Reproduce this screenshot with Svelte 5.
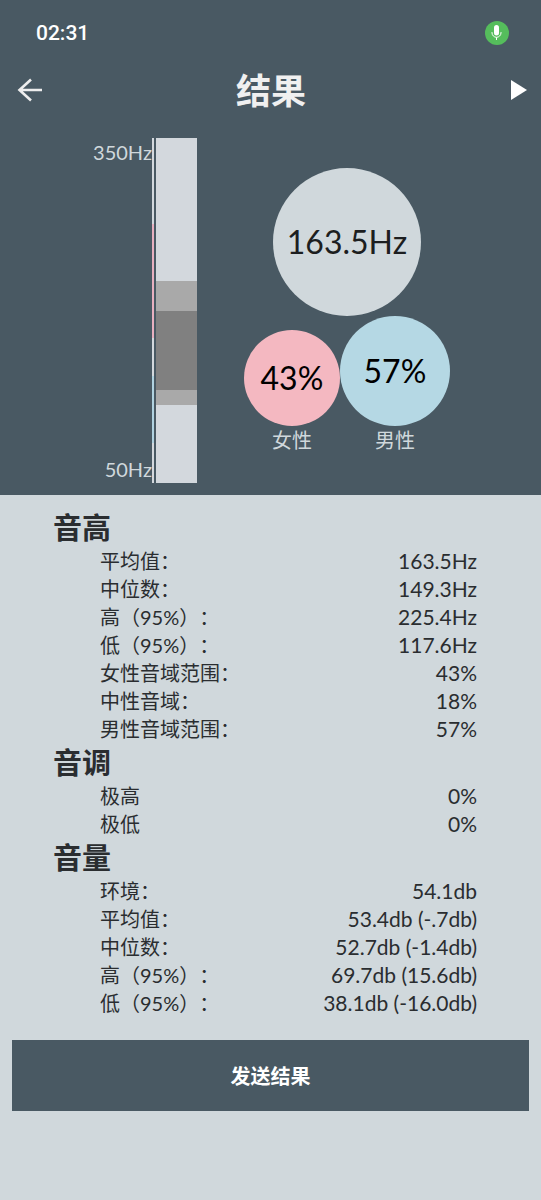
<script>
  const sections = [
    {
      title: '音高',
      rows: [
        ['平均值：', '163.5Hz'],
        ['中位数：', '149.3Hz'],
        ['高（95%）：', '225.4Hz'],
        ['低（95%）：', '117.6Hz'],
        ['女性音域范围：', '43%'],
        ['中性音域：', '18%'],
        ['男性音域范围：', '57%'],
      ],
    },
    {
      title: '音调',
      rows: [
        ['极高', '0%'],
        ['极低', '0%'],
      ],
    },
    {
      title: '音量',
      rows: [
        ['环境：', '54.1db'],
        ['平均值：', '53.4db (-.7db)'],
        ['中位数：', '52.7db (-1.4db)'],
        ['高（95%）：', '69.7db (15.6db)'],
        ['低（95%）：', '38.1db (-16.0db)'],
      ],
    },
  ];

  const scale = [
    { tone: 'light', size: 86 },
    { tone: 'pink', size: 114 },
    { tone: 'light', size: 38 },
    { tone: 'blue', size: 67 },
    { tone: 'light', size: 40 },
  ];

  const bands = [
    { tone: 'light', size: 143 },
    { tone: 'mid', size: 30 },
    { tone: 'dark', size: 79 },
    { tone: 'mid', size: 15 },
    { tone: 'light', size: 78 },
  ];
</script>

<div class="app">
  <div class="top">
    <div class="status">
      <span class="time">02:31</span>
      <svg class="mic" viewBox="0 0 24 24" aria-hidden="true">
        <circle cx="12" cy="12" r="12" fill="#55bd5c" />
        <rect x="9" y="4" width="5" height="10.500" rx="2.500" fill="#fff" />
        <path d="M7 11v.8a4.500 4.500 0 0 0 9 0V11M11.500 16.300V19" fill="none" stroke="#fff" stroke-width="1" />
      </svg>
    </div>

    <header>
      <button class="icon" aria-label="返回">
        <svg width="26" height="26" viewBox="0 0 26 26" aria-hidden="true">
          <path d="M25 13H2.500M14 2.500L2.500 13L14 23.500" fill="none" stroke="#eee" stroke-width="2.600" />
        </svg>
      </button>
      <h1>结果</h1>
      <button class="icon" aria-label="播放">
        <svg width="16" height="20" viewBox="0 0 16 20" aria-hidden="true">
          <path d="M0 0L16 10L0 20Z" fill="#fff" />
        </svg>
      </button>
    </header>

    <div class="chart">
      <div class="range">
        <div class="ticks"><span>350Hz</span><span>50Hz</span></div>
        <div class="line">
          {#each scale as s}<i class={s.tone} style="flex-grow: {s.size}"></i>{/each}
        </div>
        <div class="bar">
          {#each bands as b}<i class={b.tone} style="flex-grow: {b.size}"></i>{/each}
        </div>
      </div>

      <div class="bubbles">
        <div class="bubble main">163.5Hz</div>
        <div class="pair">
          <div class="who">
            <div class="bubble female">43%</div>
            <span>女性</span>
          </div>
          <div class="who">
            <div class="bubble male">57%</div>
            <span>男性</span>
          </div>
        </div>
      </div>
    </div>
  </div>

  <main>
    {#each sections as section}
      <h2>{section.title}</h2>
      <table>
        <tbody>
          {#each section.rows as [label, value]}
            <tr><th scope="row">{label}</th><td>{value}</td></tr>
          {/each}
        </tbody>
      </table>
    {/each}
  </main>

  <button class="send">发送结果</button>
</div>

<style>
  :global(body) {
    background: #d0d8dc;
  }

  .app {
    font-family: Lato, 'Noto Sans CJK SC', sans-serif;
    font-size: 20px;
    line-height: 28px;
    color: #2a2d30;
    text-spacing-trim: space-all;
  }

  .top {
    background: #495963;
    color: #d0d8dc;
    padding-bottom: 12px;
  }

  .status {
    display: flex;
    justify-content: space-between;
    align-items: center;
    padding: 19px 32px 0 36px;
  }

  .time {
    font-family: Roboto, sans-serif;
    font-size: 21px;
    font-weight: 500;
    color: #fff;
  }

  .mic {
    width: 24px;
    height: 24px;
  }

  header {
    display: flex;
    justify-content: space-between;
    align-items: center;
    height: 86px;
    padding: 0 14px 0 17px;
  }

  .icon {
    display: flex;
    width: 30px;
    padding: 0;
    border: 0;
    background: none;
  }

  .icon:last-child {
    width: 32px;
    justify-content: flex-end;
  }

  h1 {
    margin: 0;
    font-size: 35px;
    font-weight: 700;
    color: #f0f0f0;
  }

  .chart {
    display: flex;
    justify-content: center;
    gap: 47px;
    padding: 5px 0 0 2px;
  }

  .range {
    display: flex;
    height: 345px;
  }

  .ticks {
    display: flex;
    flex-direction: column;
    justify-content: space-between;
    text-align: right;
  }

  .line,
  .bar {
    display: flex;
    flex-direction: column;
  }

  .line {
    width: 2px;
    margin-right: 2px;
  }

  .bar {
    width: 41px;
  }

  .light {
    background: #d3d8dd;
  }

  .pink {
    background: #e8b0c0;
  }

  .blue {
    background: #b0d2e0;
  }

  .mid {
    background: #a9a9a9;
  }

  .dark {
    background: #808080;
  }

  .bubbles {
    display: flex;
    flex-direction: column;
    align-items: center;
    padding-top: 30px;
  }

  .pair {
    display: flex;
    align-items: flex-end;
  }

  .who {
    display: flex;
    flex-direction: column;
    align-items: center;
  }

  .bubble {
    display: flex;
    align-items: center;
    justify-content: center;
    border-radius: 50%;
    font-size: 32px;
    color: #000;
  }

  .main {
    width: 148px;
    height: 148px;
    background: #d0d8dc;
    color: #1c1e20;
  }

  .female {
    width: 96px;
    height: 96px;
    background: #f4b8c1;
  }

  .male {
    width: 110px;
    height: 110px;
    background: #b5d8e4;
  }

  main {
    padding: 13px 64px 0 53px;
  }

  h2 {
    margin: 0;
    font-size: 29px;
    font-weight: 700;
    line-height: 39px;
  }

  table {
    width: 100%;
    border-collapse: collapse;
  }

  th,
  td {
    padding: 0;
    font-weight: 400;
  }

  th {
    padding-left: 47px;
    text-align: left;
  }

  td {
    font-size: 21px;
    text-align: right;
  }

  .send {
    display: block;
    width: calc(100% - 24px);
    margin: 23px 12px 0;
    padding: 22px 0 21px;
    border: 0;
    background: #495963;
    color: #fff;
    font: inherit;
    font-weight: 700;
  }
</style>
